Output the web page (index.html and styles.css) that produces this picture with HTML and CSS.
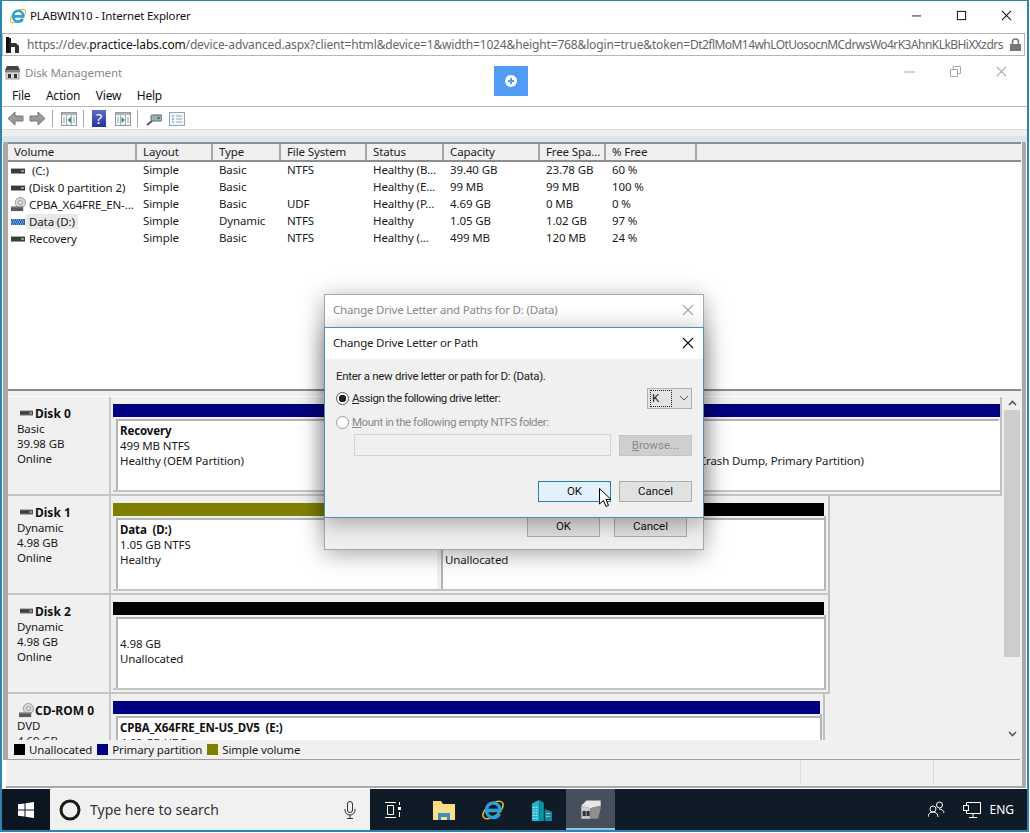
FILE: index.html
```html
<!DOCTYPE html>
<html lang="en">
<head>
<meta charset="utf-8">
<title>PLABWIN10 - Internet Explorer</title>
<link rel="stylesheet" href="styles.css">
</head>
<body>
<svg class="defs" width="0" height="0" aria-hidden="true">
  <symbol id="hdd" viewBox="0 0 14 8"><rect y="1" width="14" height="1" fill="#aaa"/><rect y="2" width="14" height="4" fill="#3c3c3c"/><rect x="10" y="3" width="3" height="2" fill="#7fae6a"/><rect y="6" width="14" height="1" fill="#999"/></symbol>
  <symbol id="cd" viewBox="0 0 16 16"><circle cx="10" cy="6" r="5.5" fill="#d8d8d8" stroke="#9a9a9a"/><circle cx="10" cy="6" r="2" fill="#fff" stroke="#888"/><rect x="0" y="10" width="13" height="5" fill="#5a5a5a"/><rect x="0" y="10" width="13" height="1" fill="#aaa"/></symbol>
  <symbol id="dyn" viewBox="0 0 14 8"><rect y="1" width="14" height="6" fill="#1f64b8"/><path d="M1 2h12M0 4h14M1 6h12" stroke="#bcd6f2" stroke-dasharray="1 1"/></symbol>
  <symbol id="x" viewBox="0 0 12 12"><path d="M1 1l10 10M11 1L1 11" fill="none" stroke="currentColor" stroke-width="1.1"/></symbol>
  <symbol id="panel-l" viewBox="0 0 16 14"><rect x=".5" y=".5" width="15" height="13" fill="#f4f6f8" stroke="#8f9aa3"/><rect x="1" y="1" width="14" height="2" fill="#aab4bd"/><path d="M5.500 3v10M10.500 3v10" stroke="#a8b0b8"/><path d="M2 6h2M2 8h2M2 10h2M12 6h2M12 8h2M12 10h2" stroke="#9aa4ac"/><path d="M10 5v6L6.500 8z" fill="#2f9a4a"/></symbol>
  <symbol id="panel-r" viewBox="0 0 16 14"><rect x=".5" y=".5" width="15" height="13" fill="#f4f6f8" stroke="#8f9aa3"/><rect x="1" y="1" width="14" height="2" fill="#aab4bd"/><path d="M5.500 3v10M10.500 3v10" stroke="#a8b0b8"/><path d="M2 6h2M2 8h2M2 10h2M12 6h2M12 8h2M12 10h2" stroke="#9aa4ac"/><path d="M6.500 5v6L10 8z" fill="#2f9a4a"/></symbol>
  <symbol id="appicon" viewBox="0 0 17 15"><path d="M3 1h11l2 4H1z" fill="#444"/><rect x="1" y="5" width="15" height="2" fill="#888"/><rect x="2" y="7" width="13" height="7" fill="#d8d8d8" stroke="#666" stroke-width=".6"/><rect x="4" y="9" width="3" height="4" fill="#333"/><rect x="10" y="9" width="3" height="4" fill="#333"/></symbol>
  <symbol id="ie" viewBox="0 0 24 24"><ellipse cx="12" cy="12" rx="12" ry="6" transform="rotate(-38 12 12)" fill="none" stroke="#e8b92e" stroke-width="1.5"/><path d="M6 12.500h13c0-4.300-2.800-7.500-6.800-7.500-4 0-6.700 3.200-6.700 7.200 0 4.100 2.700 7.300 6.900 7.300 2.800 0 4.900-1.300 6-3.700" fill="none" stroke="#2a9fdc" stroke-width="3.400"/></symbol>
</svg>

<div class="screen">
  <header class="ie-title">
    <svg class="ie-logo"><use href="#ie"/></svg>
    <span class="ie-name">PLABWIN10 - Internet Explorer</span>
    <div class="win-btns">
      <svg class="wb" viewBox="0 0 12 12"><path d="M1 6.500h10" stroke="#111" fill="none"/></svg>
      <svg class="wb" viewBox="0 0 12 12"><rect x="1.500" y="1.500" width="9" height="9" stroke="#111" stroke-width="1.100" fill="none"/></svg>
      <svg class="wb wb-x"><use href="#x"/></svg>
    </div>
  </header>
  <div class="url-bar">
    <svg class="site-ico" viewBox="0 0 14 16"><path d="M0 1h5v15H0z" fill="#222"/><path d="M5 6h5l3 3v7h-4v-6H5z" fill="#333"/><path d="M0 0h3v16H0z" fill="#111"/></svg>
    <span class="url"><span class="u-dim">https://dev.</span><span class="u-host">practice-labs.com</span><span class="u-dim">/device-advanced.aspx?client=html&amp;device=1&amp;width=1024&amp;height=768&amp;login=true&amp;token=</span><span class="u-dim u-token">Dt2flMoM14whLOtUosocnMCdrwsWo4rK3AhnKLkBHiXXzdrs</span></span>
    <svg class="lock" viewBox="0 0 11 13"><path d="M2.500 6V4a3 3 0 016 0v2" fill="none" stroke="#777" stroke-width="1.500"/><rect y="6" width="11" height="7" fill="#777"/></svg>
  </div>

  <main class="app">
    <div class="app-title">
      <svg class="app-ico"><use href="#appicon"/></svg>
      <span class="app-name">Disk Management</span>
      <div class="app-btns">
        <svg class="ab" viewBox="0 0 11 11"><path d="M0 6h11" stroke="#a8a8a8" fill="none"/></svg>
        <svg class="ab" viewBox="0 0 11 11"><path d="M.5 3.500h7v7h-7zM3 3.500v-3h7.500v7h-3" stroke="#a8a8a8" fill="none"/></svg>
        <svg class="ab ab-x"><use href="#x"/></svg>
      </div>
    </div>
    <nav class="menu"><span>File</span><span>Action</span><span>View</span><span>Help</span></nav>
    <div class="toolbar">
      <svg class="tb-arrow" viewBox="0 0 17 15"><path d="M8 1L1 7.500 8 14v-4h8V5H8z" fill="#9a9a9a" stroke="#777"/></svg>
      <svg class="tb-arrow" viewBox="0 0 17 15"><path d="M9 1l7 6.500L9 14v-4H1V5h8z" fill="#9a9a9a" stroke="#777"/></svg>
      <i class="tb-sep"></i>
      <svg class="tb-ico"><use href="#panel-l"/></svg>
      <i class="tb-sep"></i>
      <span class="tb-help">?</span>
      <svg class="tb-ico"><use href="#panel-r"/></svg>
      <i class="tb-sep"></i>
      <svg class="tb-ico" viewBox="0 0 16 14"><rect x="5" y="3" width="11" height="6" rx="1" fill="#9fb0bd" stroke="#667"/><rect x="11" y="5" width="3" height="2" fill="#3f8f4f"/><path d="M6 9L1 13" stroke="#556" stroke-width="2"/></svg>
      <svg class="tb-ico" viewBox="0 0 16 14"><rect x=".5" y=".5" width="15" height="13" fill="#f3f7fb" stroke="#8ea4b8"/><path d="M3 4h2M3 7h2M3 10h2" stroke="#3d8fc9"/><path d="M7 4h6M7 7h6M7 10h6" stroke="#9aa"/></svg>
    </div>
    <div class="strip"></div>

    <section class="content">
      <div class="list">
        <div class="row head">
          <span>Volume</span><span>Layout</span><span>Type</span><span>File System</span><span>Status</span><span>Capacity</span><span>Free Spa...</span><span>% Free</span><span></span>
        </div>
        <div class="row">
          <span class="vol"><svg class="v-ico"><use href="#hdd"/></svg><span class="sp">(C:)</span></span><span>Simple</span><span>Basic</span><span>NTFS</span><span>Healthy (B...</span><span>39.40 GB</span><span>23.78 GB</span><span>60 %</span>
        </div>
        <div class="row">
          <span class="vol"><svg class="v-ico"><use href="#hdd"/></svg><span>(Disk 0 partition 2)</span></span><span>Simple</span><span>Basic</span><span></span><span>Healthy (E...</span><span>99 MB</span><span>99 MB</span><span>100 %</span>
        </div>
        <div class="row">
          <span class="vol"><svg class="v-ico v-cd"><use href="#cd"/></svg><span>CPBA_X64FRE_EN-...</span></span><span>Simple</span><span>Basic</span><span>UDF</span><span>Healthy (P...</span><span>4.69 GB</span><span>0 MB</span><span>0 %</span>
        </div>
        <div class="row">
          <span class="vol"><svg class="v-ico"><use href="#dyn"/></svg><span class="sel">Data (D:)</span></span><span>Simple</span><span>Dynamic</span><span>NTFS</span><span>Healthy</span><span>1.05 GB</span><span>1.02 GB</span><span>97 %</span>
        </div>
        <div class="row">
          <span class="vol"><svg class="v-ico"><use href="#hdd"/></svg><span>Recovery</span></span><span>Simple</span><span>Basic</span><span>NTFS</span><span>Healthy (...</span><span>499 MB</span><span>120 MB</span><span>24 %</span>
        </div>
      </div>

      <div class="graph">
        <div class="disks">
          <div class="disk">
            <div class="d-label"><div class="d-name"><svg class="d-ico"><use href="#hdd"/></svg><b>Disk 0</b></div><div>Basic</div><div>39.98 GB</div><div>Online</div></div>
            <div class="d-map d-wide">
              <div class="bar navy"></div>
              <div class="parts">
                <div class="part p-rec"><b>Recovery</b><div>499 MB NTFS</div><div>Healthy (OEM Partition)</div></div>
                <div class="part p-c"><b>(C:)</b><div>39.40 GB NTFS</div><div>Healthy (Boot, Page File, Crash Dump, Primary Partition)</div></div>
              </div>
            </div>
          </div>
          <div class="disk">
            <div class="d-label"><div class="d-name"><svg class="d-ico"><use href="#hdd"/></svg><b>Disk 1</b></div><div>Dynamic</div><div>4.98 GB</div><div>Online</div></div>
            <div class="d-map">
              <div class="bars"><div class="bar olive b-data"></div><div class="bar black b-un"></div></div>
              <div class="parts">
                <div class="part p-data"><b>Data&nbsp; (D:)</b><div>1.05 GB NTFS</div><div>Healthy</div></div>
                <div class="part p-un"><div class="blank"></div><div>&nbsp;</div><div>Unallocated</div></div>
              </div>
            </div>
          </div>
          <div class="disk">
            <div class="d-label"><div class="d-name"><svg class="d-ico"><use href="#hdd"/></svg><b>Disk 2</b></div><div>Dynamic</div><div>4.98 GB</div><div>Online</div></div>
            <div class="d-map">
              <div class="bar black"></div>
              <div class="parts"><div class="part p-full"><div class="blank"></div><div>4.98 GB</div><div>Unallocated</div></div></div>
            </div>
          </div>
          <div class="disk">
            <div class="d-label"><div class="d-name"><svg class="d-ico-cd"><use href="#cd"/></svg><b>CD-ROM 0</b></div><div>DVD</div><div>4.69 GB</div><div>Online</div></div>
            <div class="d-map d-cd">
              <div class="bar navy"></div>
              <div class="parts"><div class="part p-full"><b>CPBA_X64FRE_EN-US_DV5&nbsp; (E:)</b><div>4.69 GB UDF</div></div></div>
            </div>
          </div>
        </div>
        <div class="scroll">
          <svg class="s-arr" viewBox="0 0 9 6"><path d="M1 5l3.500-3.500L8 5" fill="none" stroke="#555" stroke-width="1.600"/></svg>
          <div class="s-thumb"></div>
          <svg class="s-arr" viewBox="0 0 9 6"><path d="M1 1l3.500 3.500L8 1" fill="none" stroke="#555" stroke-width="1.600"/></svg>
        </div>
      </div>

      <div class="legend">
        <i class="sw black"></i><span>Unallocated</span>
        <i class="sw navy"></i><span>Primary partition</span>
        <i class="sw olive"></i><span>Simple volume</span>
      </div>
    </section>
    <div class="status"><i class="st st-a"></i><i class="st st-b"></i><i class="st st-c"></i></div>
  </main>

  <footer class="taskbar">
    <div class="start"><svg class="win" viewBox="0 0 16 16"><path d="M0 2.300L6.500 1.400V7.500H0zM7.500 1.300L16 0v7.500H7.500zM0 8.500h6.500v6.100L0 13.700zM7.500 8.500H16V16l-8.500-1.300z" fill="#fff"/></svg></div>
    <div class="search">
      <svg class="cortana" viewBox="0 0 22 22"><circle cx="11" cy="11" r="9" fill="none" stroke="#1a1a1a" stroke-width="3"/></svg>
      <span class="s-text">Type here to search</span>
      <svg class="mic" viewBox="0 0 12 18"><rect x="3.500" y=".5" width="5" height="11" rx="2.500" fill="none" stroke="#333"/><path d="M1 8v1a5 5 0 0010 0V8M6 14v3M3 17.500h6" fill="none" stroke="#333"/></svg>
    </div>
    <div class="tasks">
      <div class="task"><svg class="t-view" viewBox="0 0 16 16"><path d="M0 .5h11M0 15.500h11M2.500 3.500h6v9h-6z" fill="none" stroke="#fff"/><rect x="13" y="5" width="3" height="3" fill="#fff"/><path d="M14.500 10v5M14.500 0v3" stroke="#fff"/></svg></div>
      <div class="task"><svg class="t-ico" viewBox="0 0 22 20"><path d="M0 1h8l2 3h12v16H0z" fill="#f6d874"/><rect x="0" y="5" width="22" height="15" fill="#fbe08a"/><path d="M5 20v-7h12v7h-3v-3H8v3z" fill="#3a8fc4"/></svg></div>
      <div class="task"><svg class="t-ico t-e"><use href="#ie"/></svg></div>
      <div class="task"><svg class="t-ico" viewBox="0 0 22 24"><path d="M0 5l8-4v23H0z" fill="#1fb7c9"/><path d="M8 1l5 3v20H8z" fill="#0d93a8"/><path d="M14 11l8 3v10h-8z" fill="#0f8aa0"/><path d="M1 9h6M1 12h6M1 15h6M1 18h6M1 21h6M16 16h4M16 19h4" stroke="#d8f4f8" stroke-dasharray="2 1"/></svg></div>
      <div class="task active"><svg class="t-ico" viewBox="0 0 17 15"><path d="M5 1h11v4l-8 2-7-2z" fill="#e6e6e6"/><path d="M1 5l7 2v8H1z" fill="#cfcfcf"/><path d="M8 7l8-2v2l-2 8H8z" fill="#8e8e8e"/><rect x="2" y="9" width="2.500" height="4" fill="#333"/><rect x="5" y="9" width="2.500" height="4" fill="#333"/></svg></div>
    </div>
    <div class="tray">
      <svg class="people" viewBox="0 0 17 17"><circle cx="11.500" cy="4" r="3" fill="none" stroke="#fff"/><circle cx="5" cy="8" r="3" fill="none" stroke="#fff"/><path d="M0 16c0-3 2-5 5-5s5 2 5 5M11 8c3 0 5 2 5 4" fill="none" stroke="#fff"/></svg>
      <svg class="net" viewBox="0 0 18 16"><path d="M3.500 4V.5h14v11h-14V9M10 11.500v3.500M6 15.500h8" fill="none" stroke="#fff"/><rect x=".5" y="3.500" width="5" height="5" fill="none" stroke="#fff"/></svg>
      <span class="eng">ENG</span>
    </div>
  </footer>

  <button class="float-btn" type="button" aria-label="Expand"><svg class="fb-ico" viewBox="0 0 12 12"><circle cx="6" cy="6" r="6" fill="#fff"/><path d="M6 3v6M3 6h6" stroke="#4f9bf5" stroke-width="2"/></svg></button>

  <div class="dlg dlg-back">
    <div class="dlg-head"><span>Change Drive Letter and Paths for D: (Data)</span><svg class="dlg-x"><use href="#x"/></svg></div>
    <div class="back-btns"><span class="btn">OK</span><span class="btn">Cancel</span></div>
  </div>

  <div class="dlg dlg-front">
    <div class="dlg-head"><span>Change Drive Letter or Path</span><svg class="dlg-x"><use href="#x"/></svg></div>
    <div class="dlg-body">
      <div class="intro">Enter a new drive letter or path for D: (Data).</div>
      <div class="opt-row">
        <i class="radio on"></i><span class="opt"><u>A</u>ssign the following drive letter:</span>
        <span class="combo"><span class="combo-val">K</span><svg class="chev" viewBox="0 0 10 6"><path d="M1 1l4 4 4-4" fill="none" stroke="#555"/></svg></span>
      </div>
      <div class="opt-row opt-2"><i class="radio"></i><span class="opt off"><u>M</u>ount in the following empty NTFS folder:</span></div>
      <div class="path-row"><span class="path"></span><span class="btn btn-dis"><u>B</u>rowse...</span></div>
      <div class="front-btns"><span class="btn btn-def">OK</span><span class="btn">Cancel</span></div>
    </div>
  </div>

  <svg class="cursor" viewBox="0 0 12 20"><path d="M.5.5v15.500l4-3.500 2.500 6 2.500-1-2.500-6h5z" fill="#fff" stroke="#000"/></svg>
</div>
</body>
</html>
```
FILE: styles.css
```css
* { box-sizing: border-box; }
html, body { margin: 0; padding: 0; background: #fff; }
body { width: 1030px; height: 833px; overflow: hidden; font: 11.5px/15px "Noto Sans", "Open Sans", sans-serif; letter-spacing: -.12px; color: #1a1a1a; }
.defs { position: absolute; }
i { display: block; }

.screen { position: relative; width: 1029px; height: 832px; border: 1px solid #2f84ae; border-width: 1px 2px 2px 2px; background: #fff; display: flex; flex-direction: column; overflow: hidden; }

.ie-title { height: 32px; flex: none; display: flex; align-items: center; padding: 0 0 3px 7px; background: #fff; }
.ie-logo { width: 18px; height: 18px; margin-right: 3px; }
.ie-name { font-size: 11.500px; letter-spacing: -.2px; color: #111; }
.win-btns { margin-left: auto; display: flex; gap: 34px; padding-right: 15px; }
.wb { width: 11px; height: 11px; color: #111; }

.url-bar { height: 23px; flex: none; margin: 0 2px 0 0; border: 1px solid #b5b5b5; display: flex; align-items: center; padding: 0 3px; background: #fff; }
.site-ico { width: 14px; height: 16px; margin-right: 7px; flex: none; }
.url { font-size: 12px; white-space: nowrap; flex: 1; overflow: hidden; letter-spacing: -.15px; }
.u-dim { color: #666; }
.u-host { color: #111; }
.u-token { letter-spacing: -.55px; }
.lock { width: 11px; height: 13px; flex: none; margin-left: 4px; }

.app { flex: 1; min-height: 0; display: flex; flex-direction: column; background: #fff; }
.app-title { height: 29px; flex: none; display: flex; align-items: center; padding: 4px 0 0 2px; }
.app-ico { width: 17px; height: 15px; margin-right: 4px; }
.app-name { color: #8a8a8a; letter-spacing: -.1px; }
.app-btns { margin-left: auto; display: flex; gap: 35px; padding: 0 20px 3px 0; }
.ab { width: 11px; height: 11px; }
.ab-x { color: #a0a0a0; }
.menu { height: 22px; flex: none; display: flex; gap: 15.500px; align-items: center; padding: 0 0 1px 10px; border-bottom: 1px solid #b8b8b8; color: #111; font-size: 12px; letter-spacing: -.2px; }
.toolbar { height: 23px; flex: none; display: flex; align-items: center; padding: 1px 0 0 5px; border-bottom: 1px solid #dcdcdc; }
.tb-arrow { width: 17px; height: 15px; margin-right: 5px; }
.tb-sep { width: 1px; height: 17px; background: #a8a8a8; margin: 0 8px 0 1px; }
.tb-ico { width: 16px; height: 14px; margin-right: 7px; }
.tb-ico + .tb-sep { margin-left: -1px; }
.tb-help { width: 14px; height: 17px; background: linear-gradient(#5a6ecb, #24349b); color: #fff; font-weight: 400; font-size: 15px; line-height: 17px; text-align: center; margin-right: 9px; }
.strip { height: 12px; flex: none; background: linear-gradient(#efefef 0, #efefef 6px, #dbe5f0 6px); }

.content { flex: none; height: 618px; display: flex; flex-direction: column; border-left: 5px solid #a9a9a9; border-right: 4px solid #a9a9a9; margin: 0 1px; background: #f0f0f0; position: relative; }
.list { height: 249px; flex: none; background: #fff; border-bottom: 2px solid #8a8a8a; margin-right: 1px; }
.row { display: grid; grid-template-columns: 129px 76px 68px 86px 77px 96px 66px 91px 1fr; height: 17px; line-height: 15px; white-space: nowrap; }
.row > span { padding-left: 6px; overflow: hidden; }
.row.head { height: 20px; background: #f0f0f0; border-top: 2px solid #8d8d8d; border-bottom: 2px solid #8d8d8d; color: #222; }
.row.head > span { border-right: 2px solid #a6a6a6; height: 16px; line-height: 15px; }
.row.head > span:last-child { border-right: 0; }
.row > .vol { padding-left: 3px; display: flex; align-items: center; overflow: visible; }
.v-ico { width: 14px; height: 8px; flex: none; margin-right: 4px; }
.v-cd { width: 15px; height: 15px; margin-right: 3px; }
.sp { padding-left: 3px; }
.sel { background: #e9e9e9; padding: 0 3px 0 0; box-shadow: -3px 0 0 #e9e9e9; }

.graph { flex: none; height: 349px; padding-top: 5px; display: flex; align-items: stretch; min-height: 0; }
.disks { flex: 1; min-width: 0; overflow: hidden; border-top: 1px solid #fff; }
.disk { display: flex; width: fit-content; height: 99px; border-bottom: 2px solid #c4c4c4; }
.d-label { width: 103px; flex: none; padding: 8px 0 0 9px; border-right: 2px solid #c8c8c8; }
.d-name { display: flex; align-items: center; height: 16px; font-size: 12px; letter-spacing: 0; }
.d-name b { color: #111; }
.d-ico { width: 13px; height: 8px; margin: 0 2px 0 3px; flex: none; }
.d-ico-cd { width: 15px; height: 15px; margin: 0 1px 0 2px; flex: none; }
.d-map { width: 719px; flex: none; padding: 7px 4px 0 2px; border-right: 2px solid #c0c0c0; }
.d-wide { width: 891px; padding-right: 0; }
.d-cd { width: 714px; padding-right: 3px; }
.bar { height: 13px; width: 100%; }
.bars { display: flex; }
.navy { background: #000080; }
.olive { background: #808000; }
.black { background: #000; }
.b-data { width: 328px; }
.b-un { flex: 1; }
.parts { display: flex; gap: 4px; height: 75px; padding: 2px 0 0 3px; margin-right: -2px; border-right: 2px solid #b4b4b4; border-bottom: 2px solid #c4c4c4; }
.d-wide .parts { margin-right: 0; border-right: 0; }
.part { height: 71px; background: #fff; border-top: 2px solid #b4b4b4; border-left: 2px solid #b4b4b4; padding: 2px 0 0 2px; white-space: nowrap; overflow: hidden; color: #1a1a1a; }
.part b { display: block; color: #111; }
.blank { height: 15px; }
.p-rec { width: 280px; }
.p-c { flex: 1; padding-left: 166px; border-right: 2px solid #fff; }
.p-data { width: 321px; }
.p-un { flex: 1; }
.p-full { flex: 1; }

.scroll { width: 16px; flex: none; margin-right: 2px; display: flex; flex-direction: column; align-items: center; background: #f0f0f0; padding: 4px 0 3px; }
.s-arr { width: 9px; height: 6px; flex: none; }
.s-thumb { flex: 1; width: 100%; background: linear-gradient(#cdcdcd 0, #cdcdcd 78%, #f0f0f0 78%); margin: 4px 0; }
.legend { height: 20px; flex: none; display: flex; align-items: center; border-bottom: 1px solid #9e9e9e; background: #f0f0f0; margin-right: 2px; }
.sw { width: 11px; height: 11px; margin: 0 4px 0 5px; }
.legend .sw:first-child { margin-left: 6px; }
.status { height: 28px; flex: none; display: flex; margin: 0 1px 0 4px; background: #f0f0f0; border-bottom: 2px solid #a8a8a8; border-right: 4px solid #a9a9a9; }
.st { border-right: 1px solid #dcdcdc; height: 24px; }
.st-a { width: 795px; }
.st-b { width: 133px; }
.st-c { flex: 1; border-right: 0; }

.taskbar { height: 41px; flex: none; display: flex; background: #101b28; }
.start { width: 48px; display: flex; align-items: center; justify-content: center; background: #0c1622; }
.win { width: 16px; height: 16px; }
.search { width: 320px; height: 41px; background: #f1f1f1; display: flex; align-items: center; padding-left: 9px; }
.cortana { width: 22px; height: 22px; margin-right: 9px; flex: none; }
.s-text { font-size: 14px; letter-spacing: 0; color: #333; }
.mic { width: 12px; height: 18px; margin-left: auto; margin-right: 14px; }
.tasks { display: flex; }
.task { width: 49px; height: 41px; display: flex; align-items: center; justify-content: center; }
.t-view { width: 16px; height: 16px; margin-right: 4px; }
.t-ico { width: 22px; height: 22px; }
.t-e { width: 24px; height: 24px; }
.active { background: #46505c; border-bottom: 2px solid #8fc3e8; }
.tray { margin-left: auto; display: flex; align-items: center; padding-right: 13px; }
.people { width: 17px; height: 17px; margin-right: 18px; }
.net { width: 18px; height: 16px; margin-right: 8px; }
.eng { color: #fff; font-size: 12px; letter-spacing: 0; }

.float-btn { position: absolute; left: 492px; top: 65px; width: 34px; height: 30px; border: 0; padding: 0; background: #4f9bf5; display: flex; align-items: center; justify-content: center; }
.fb-ico { width: 12px; height: 12px; }

.dlg { position: absolute; left: 322px; width: 380px; background: #f0f0f0; box-shadow: 0 4px 22px rgba(0,0,0,.35); }
.dlg-back { top: 293px; height: 256px; border: 1px solid #a8a8a8; }
.dlg-back .dlg-head { color: #8a8a8a; height: 33px; padding-bottom: 4px; }
.dlg-back .dlg-x { color: #a8a8a8; }
.dlg-front { top: 326px; height: 191px; border: 1px solid #4a8fb8; }
.dlg-head { height: 31px; padding: 0 9px 2px 8px; background: #fff; display: flex; align-items: center; justify-content: space-between; color: #222; letter-spacing: -.2px; }
.dlg-x { width: 12px; height: 12px; color: #111; }
.back-btns { position: absolute; left: 202px; top: 221px; display: flex; gap: 14px; }
.dlg-body { padding: 10px 11px 0 11px; font: 11.5px/15px Roboto, sans-serif; letter-spacing: -.45px; }
.intro { height: 15px; color: #222; letter-spacing: -.3px; }
.opt-row { display: flex; align-items: center; height: 22px; margin-top: 3px; }
.opt-2 { margin-top: 2px; }
.radio { width: 13px; height: 13px; border-radius: 50%; border: 1px solid #9a9a9a; background: #fff; margin-right: 3px; flex: none; }
.radio.on { border-color: #555; background: radial-gradient(circle, #222 0, #222 3.500px, #fff 4px); }
.opt { color: #222; }
.opt.off { color: #8a8a8a; }
.combo { margin-left: auto; width: 45px; height: 21px; border: 1px solid #b0b0b0; background: #e4e4e4; display: flex; align-items: center; padding-left: 2px; }
.combo-val { border: 1px dotted #222; width: 22px; height: 17px; line-height: 15px; padding-left: 1px; }
.chev { width: 10px; height: 6px; margin-left: 7px; }
.path-row { display: flex; gap: 8px; margin: 1px 0 0 18px; }
.path { width: 257px; height: 22px; background: #f0f0f0; border: 1px solid #d4d4d4; }
.btn { width: 73px; height: 21px; font: 11.5px/19px Roboto, sans-serif; letter-spacing: 0; text-align: center; background: #e1e1e1; border: 1px solid #adadad; color: #111; display: block; }
.btn-dis { background: #cfcfcf; color: #8a8a8a; border-color: #c4c4c4; margin-top: 1px; }
.btn-def { background: #e3f1fb; border: 1px solid #2f7ea8; }
.front-btns { display: flex; justify-content: flex-end; gap: 8px; margin-top: 25px; }
.cursor { position: absolute; left: 597px; top: 487px; width: 12px; height: 20px; }
```
